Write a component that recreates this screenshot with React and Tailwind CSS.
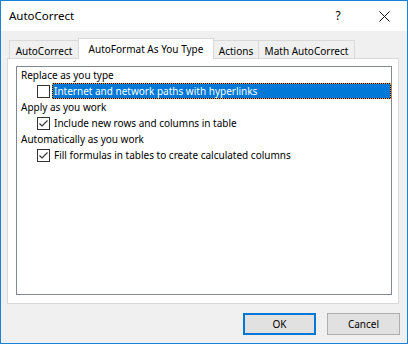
import React from "react";

const font = { fontFamily: '"Noto Sans", "Open Sans", sans-serif' };

function Checkbox({ checked }) {
  return (
    <div className="w-[13px] h-[13px] border border-[#333333] bg-white flex items-center justify-center shrink-0">
      {checked && (
        <svg width="11" height="11" viewBox="0 0 11 11">
          <polyline points="1.5,5.5 4,8 9.5,2.5" fill="none" stroke="#333333" strokeWidth="1.1" />
        </svg>
      )}
    </div>
  );
}

function Heading({ children }) {
  return <div className="h-[16px] flex items-center pl-[4px] text-[10px] text-black leading-none">{children}</div>;
}

function Item({ checked, selected, children }) {
  return (
    <div className="h-[16px] flex items-center pl-[20px]">
      <Checkbox checked={checked} />
      {selected ? (
        <div className="ml-[2px] flex-1 h-[16px] border border-dotted border-[#ff9b3b] bg-black">
          <div className="h-full bg-[#0078d7] text-white text-[10px] leading-none flex items-center pl-[1px]">{children}</div>
        </div>
      ) : (
        <div className="ml-[2px] flex-1 h-[16px] text-black text-[10px] leading-none flex items-center pl-[2px]">{children}</div>
      )}
    </div>
  );
}

export default function App() {
  return (
    <div style={font} className="w-[408px] h-[344px] border border-[#1883d7] bg-[#f0f0f0] flex flex-col">
      <div className="h-[30px] bg-white flex items-center shrink-0">
        <div className="pl-[8px] text-[11.5px] text-black">AutoCorrect</div>
        <div className="ml-auto flex h-full">
          <div className="w-[46px] h-full flex items-center justify-center text-[12px] text-black">?</div>
          <div className="w-[46px] h-full flex items-center justify-center">
            <svg width="11" height="11" viewBox="0 0 11 11">
              <path d="M0.5 0.5 L10.5 10.5 M10.5 0.5 L0.5 10.5" stroke="#111" strokeWidth="1" fill="none" />
            </svg>
          </div>
        </div>
      </div>
      <div className="flex-1 flex flex-col px-[6px] pt-[7px]">
        <div className="flex items-end h-[20px] pl-[2px]">
          <div className="w-[70px] h-[18px] border border-b-0 border-[#d9d9d9] bg-[#f0f0f0] flex items-center justify-center text-[10px] text-black leading-none pt-[2px]">AutoCorrect</div>
          <div className="relative z-10 -ml-px w-[136px] h-[21px] -mb-px border border-b-0 border-[#d9d9d9] bg-white flex items-center justify-center text-[10px] text-black leading-none">AutoFormat As You Type</div>
          <div className="-ml-px w-[46px] h-[18px] border border-b-0 border-[#d9d9d9] bg-[#f0f0f0] flex items-center justify-center text-[10px] text-black leading-none pt-[2px]">Actions</div>
          <div className="-ml-px w-[97px] h-[18px] border border-b-0 border-[#d9d9d9] bg-[#f0f0f0] flex items-center justify-center text-[10px] text-black leading-none pt-[2px]">Math AutoCorrect</div>
        </div>
        <div className="w-[392px] h-[246px] border border-[#d9d9d9] bg-white pt-[7px] pl-[8px]">
          <div className="w-[376px] h-[229px] border border-[#828790] bg-white flex flex-col">
            <Heading>Replace as you type</Heading>
            <Item checked={false} selected>Internet and network paths with hyperlinks</Item>
            <Heading>Apply as you work</Heading>
            <Item checked>Include new rows and columns in table</Item>
            <Heading>Automatically as you work</Heading>
            <Item checked>Fill formulas in tables to create calculated columns</Item>
          </div>
        </div>
        <div className="flex justify-end gap-[11px] mt-[9px] pr-[1px]">
          <div className="w-[73px] h-[22px] border-2 border-[#0078d7] bg-[#e1e1e1] flex items-center justify-center text-[10px] text-black leading-none">OK</div>
          <div className="w-[73px] h-[22px] border border-[#adadad] bg-[#e1e1e1] flex items-center justify-center text-[10px] text-black leading-none">Cancel</div>
        </div>
      </div>
    </div>
  );
}
